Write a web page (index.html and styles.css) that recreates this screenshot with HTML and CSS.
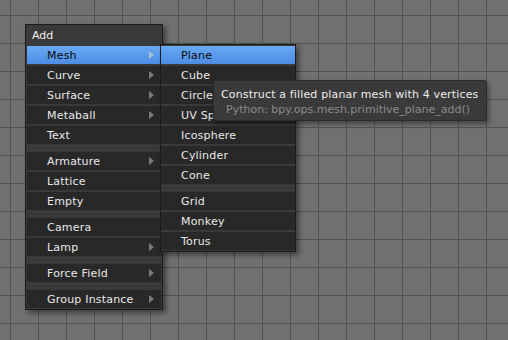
FILE: index.html
```html
<!DOCTYPE html>
<html lang="en">
<head>
    <meta charset="UTF-8">
    <title>Add Menu</title>
    <link rel="stylesheet" href="styles.css">
</head>
<body>

    <div class="viewport">

        <div class="menu menu-add">
            <div class="menu-title">Add</div>
            <div class="menu-item active has-sub">Mesh</div>
            <div class="menu-item has-sub">Curve</div>
            <div class="menu-item has-sub">Surface</div>
            <div class="menu-item has-sub">Metaball</div>
            <div class="menu-item">Text</div>
            <div class="menu-sep"></div>
            <div class="menu-item has-sub">Armature</div>
            <div class="menu-item">Lattice</div>
            <div class="menu-item">Empty</div>
            <div class="menu-sep"></div>
            <div class="menu-item">Camera</div>
            <div class="menu-item has-sub">Lamp</div>
            <div class="menu-sep"></div>
            <div class="menu-item has-sub">Force Field</div>
            <div class="menu-sep"></div>
            <div class="menu-item has-sub">Group Instance</div>
        </div>

        <div class="menu menu-mesh">
            <div class="menu-item active">Plane</div>
            <div class="menu-item">Cube</div>
            <div class="menu-item">Circle</div>
            <div class="menu-item">UV Sphere</div>
            <div class="menu-item">Icosphere</div>
            <div class="menu-item">Cylinder</div>
            <div class="menu-item">Cone</div>
            <div class="menu-sep"></div>
            <div class="menu-item">Grid</div>
            <div class="menu-item">Monkey</div>
            <div class="menu-item">Torus</div>
        </div>

        <div class="tooltip">
            <div class="tip-main">Construct a filled planar mesh with 4 vertices</div>
            <div class="tip-python">Python: bpy.ops.mesh.primitive_plane_add()</div>
        </div>

    </div>

</body>
</html>
```

FILE: styles.css
```css
body {
    margin: 0;
    font-family: "DejaVu Sans", sans-serif;
    font-size: 11px;
    color: #e8e8e8;
}

.viewport {
    position: relative;
    width: 508px;
    height: 340px;
    overflow: hidden;
    background-color: #707070;
    background-image:
        linear-gradient(to right, #4b574d 1px, transparent 1px),
        linear-gradient(to bottom, #4b574d 1px, transparent 1px);
    background-size: 28px 28px;
    background-position: 10px 15px;
}

/* popup menus float over the 3d view */
.menu {
    position: absolute;
    display: flex;
    flex-direction: column;
    gap: 2px;
    background: #393939;
    border: 1px solid #1c1c1c;
    box-shadow: 3px 3px 5px rgba(0, 0, 0, 0.45);
}

.menu-add {
    left: 25px;
    top: 24px;
    width: 134px;
    padding: 0 1px 1px 1px;
}

.menu-mesh {
    left: 160px;
    top: 44px;
    width: 134px;
    padding: 1px 0 1px 0;
}

.menu-title {
    height: 17px;
    line-height: 17px;
    padding-top: 2px;
    padding-left: 5px;
    color: #f0f0f0;
}

.menu-item {
    position: relative;
    height: 17px;
    line-height: 17px;
    padding-top: 1px;
    padding-left: 20px;
    background: #282828;
    color: #e8e8e8;
    letter-spacing: 0.2px;
}

.menu-sep {
    height: 2px;
    background: #363636;
    border-top: 1px solid #3d3d3d;
    border-bottom: 1px solid #3d3d3d;
}

.menu-item.active {
    background: linear-gradient(#6aa8f2, #4c8de4);
    color: #0c0c0c;
}

.has-sub::after {
    content: "";
    position: absolute;
    right: 7px;
    top: 5px;
    border-left: 5px solid #7a7a7a;
    border-top: 4px solid transparent;
    border-bottom: 4px solid transparent;
}

.has-sub.active::after {
    border-left-color: #a8bfd8;
}

.tooltip {
    position: absolute;
    left: 213px;
    top: 80px;
    width: 258px;
    padding: 6px 7px 3px 7px;
    background: #3a3a3a;
    border: 1px solid #2a2a2a;
    border-radius: 3px;
    box-shadow: 2px 3px 5px rgba(0, 0, 0, 0.4);
}

.tip-main {
    height: 15px;
    line-height: 15px;
    color: #ececec;
    letter-spacing: 0.15px;
}

.tip-python {
    height: 15px;
    line-height: 15px;
    padding-left: 5px;
    color: #8a8a8a;
}
```
